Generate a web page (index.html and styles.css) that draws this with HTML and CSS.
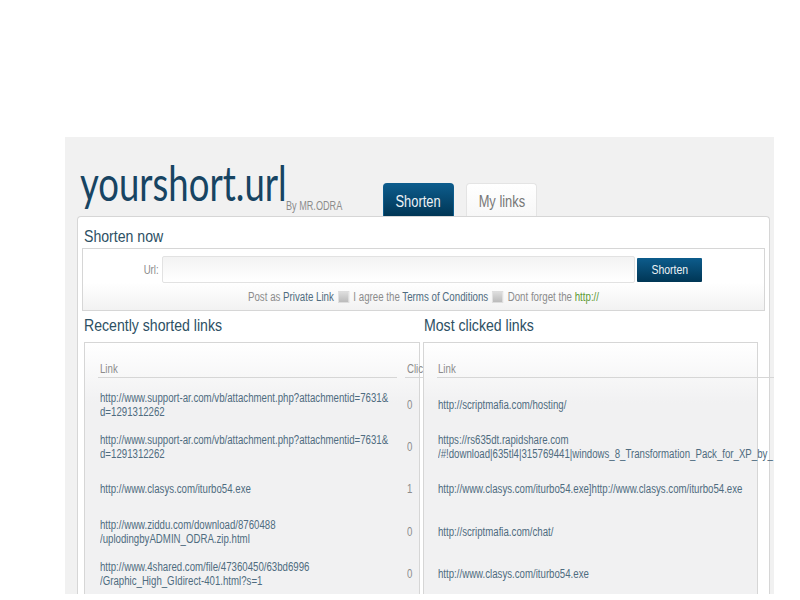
FILE: index.html
```html
<!DOCTYPE html>
<html lang="en">
<head>
    <meta charset="UTF-8">
    <meta name="viewport" content="width=device-width, initial-scale=1.0">
    <title>yourshort.url</title>
    <link rel="stylesheet" href="styles.css">
</head>
<body>
    <div class="page">
        <div class="header">
            <div class="logo">yourshort.url</div>
            <div class="by">By MR.ODRA</div>
            <div class="tabs">
                <a class="tab active" href="#"><span>Shorten</span></a>
                <a class="tab" href="#"><span>My links</span></a>
            </div>
        </div>

        <div class="panel">
            <h2 class="title"><span>Shorten now</span></h2>
            <form class="shorten-box" onsubmit="return false;">
                <div class="url-row">
                    <label class="url-label" for="url"><span>Url:</span></label>
                    <input class="url-input" type="text" id="url">
                    <button class="btn" type="submit"><span>Shorten</span></button>
                </div>
                <div class="options">
                    <span>Post as <a href="#">Private Link</a></span>
                    <span class="check"></span>
                    <span>I agree the <a href="#">Terms of Conditions</a></span>
                    <span class="check"></span>
                    <span>Dont forget the <span class="green">http://</span></span>
                </div>
            </form>

            <div class="columns">
                <div class="column">
                    <h2 class="title"><span>Recently shorted links</span></h2>
                    <div class="list-box">
                        <table class="links two">
                            <thead>
                                <tr><th><span>Link</span></th><th><span>Clicks</span></th></tr>
                            </thead>
                            <tbody>
                                <tr><td><a href="#">http://www.support-ar.com/vb/attachment.php?attachmentid=7631&amp;<br>d=1291312262</a></td><td><span>0</span></td></tr>
                                <tr><td><a href="#">http://www.support-ar.com/vb/attachment.php?attachmentid=7631&amp;<br>d=1291312262</a></td><td><span>0</span></td></tr>
                                <tr><td><a href="#">http://www.clasys.com/iturbo54.exe</a></td><td><span>1</span></td></tr>
                                <tr><td><a href="#">http://www.ziddu.com/download/8760488<br>/uplodingbyADMIN_ODRA.zip.html</a></td><td><span>0</span></td></tr>
                                <tr><td><a href="#">http://www.4shared.com/file/47360450/63bd6996<br>/Graphic_High_GIdirect-401.html?s=1</a></td><td><span>0</span></td></tr>
                            </tbody>
                        </table>
                    </div>
                </div>
                <div class="column">
                    <h2 class="title"><span>Most clicked links</span></h2>
                    <div class="list-box front">
                        <table class="links one">
                            <thead>
                                <tr><th><span>Link</span></th></tr>
                            </thead>
                            <tbody>
                                <tr><td><a href="#">http://scriptmafia.com/hosting/</a></td></tr>
                                <tr><td><a href="#">https://rs635dt.rapidshare.com<br>/#!download|635tl4|315769441|windows_8_Transformation_Pack_for_XP_by_</a></td></tr>
                                <tr><td><a href="#">http://www.clasys.com/iturbo54.exe]http://www.clasys.com/iturbo54.exe</a></td></tr>
                                <tr><td><a href="#">http://scriptmafia.com/chat/</a></td></tr>
                                <tr><td><a href="#">http://www.clasys.com/iturbo54.exe</a></td></tr>
                            </tbody>
                        </table>
                    </div>
                </div>
            </div>
        </div>
    </div>
</body>
</html>
```

FILE: styles.css
```css
body {
    margin: 0;
    padding: 137px 26px 0 65px;
    background-color: #fff;
    font-family: "Liberation Sans", Arial, sans-serif;
    color: #8c8c8c;
}

a {
    color: #4f6c80;
    text-decoration: none;
}

.page {
    height: 457px;
    overflow: hidden;
    background-color: #f1f1f1;
}

/* the text is squeezed sideways in the original */
.tab span,
.title span,
.url-label span,
.btn span,
.links th span,
.links td span,
.links td a {
    display: inline-block;
    transform: scaleX(0.805);
    transform-origin: left;
}

.title span {
    transform: scaleX(0.83);
}

.tab span,
.btn span {
    transform-origin: center;
}

.url-label span {
    transform-origin: right;
}

/* header */
.header {
    display: flex;
    align-items: flex-end;
    height: 79px;
    padding-left: 15px;
}

.logo {
    width: 206px;
    font-family: Lato, sans-serif;
    font-size: 49px;
    line-height: 58px;
    white-space: nowrap;
    color: #174462;
    margin-bottom: 5px;
    transform: scaleX(0.745);
    transform-origin: left;
}

.by {
    width: 57px;
    font-size: 12px;
    white-space: nowrap;
    margin-bottom: 3px;
    transform: scaleX(0.76);
    transform-origin: left;
}

.tabs {
    display: flex;
    gap: 12px;
    margin-left: 40px;
}

.tab {
    display: block;
    box-sizing: border-box;
    width: 71px;
    height: 33px;
    line-height: 35px;
    text-align: center;
    font-size: 16px;
    color: #777;
    background: linear-gradient(#fff, #f7f7f7);
    border: 1px solid #e4e4e4;
    border-bottom: 0;
    border-radius: 4px 4px 0 0;
}

.tab.active {
    color: #eef3f6;
    background: linear-gradient(#0d5c8c, #003655);
    border-color: #0d5c8c;
}

/* panel */
.panel {
    margin: 0 4px 0 12px;
    height: 378px;
    background-color: #fff;
    border: 1px solid #d6d6d6;
    border-bottom: 0;
    border-radius: 4px 4px 0 0;
    padding: 0 4px;
}

.title {
    margin: 0;
    font-size: 17px;
    font-weight: normal;
    color: #2d5064;
    padding-left: 2px;
    line-height: 31px;
    padding-top: 4px;
    height: 27px;
}

.shorten-box {
    box-sizing: border-box;
    height: 63px;
    border: 1px solid #d6d6d6;
    background: linear-gradient(#fff 55%, #f2f2f2);
}

.url-row {
    display: flex;
    align-items: center;
    padding-top: 7px;
}

.url-label {
    width: 76px;
    text-align: right;
    font-size: 12px;
    margin-right: 3px;
}

.url-input {
    box-sizing: border-box;
    width: 473px;
    height: 27px;
    border: 1px solid #e2e2e2;
    border-radius: 2px;
    background: linear-gradient(#f3f3f3, #fff);
}

.btn {
    width: 65px;
    height: 24px;
    margin-left: 2px;
    padding: 0;
    border: 0;
    border-radius: 1px;
    background: linear-gradient(#0d5c8c, #003655);
    color: #eef3f6;
    font-family: inherit;
    font-size: 13px;
}

.options {
    display: flex;
    justify-content: center;
    align-items: center;
    gap: 5px;
    margin-top: 7px;
    font-size: 12px;
    transform: scaleX(0.81);
}

.check {
    width: 14px;
    height: 12px;
    background: linear-gradient(#ddd, #bbb);
    border: 1px solid #ddd;
    box-sizing: border-box;
}

.green {
    color: #5d9a34;
}

/* link lists */
.columns {
    display: grid;
    grid-template-columns: 340px 340px;
}

.column {
    min-width: 0;
}

.column .title {
    line-height: 22px;
    height: 26px;
    padding-bottom: 1px;
}

.list-box {
    box-sizing: border-box;
    width: 336px;
    height: 260px;
    margin-left: 2px;
    border: 1px solid #d6d6d6;
    background: linear-gradient(#fff, #f1f1f2 60px);
    padding-top: 17px;
    padding-left: 5px;
}

.front {
    position: relative;
    width: 335px;
    margin-left: 1px;
}

.links {
    table-layout: fixed;
    width: 354px;
    border-collapse: separate;
    border-spacing: 8px 0;
    font-size: 12px;
}

.links th {
    font-weight: normal;
    text-align: left;
    white-space: nowrap;
    height: 16px;
    padding: 1px 0 0 2px;
    border-bottom: 1px solid #d6d6d6;
    overflow: hidden;
}

.links td {
    height: 42.2px;
    padding: 0 0 0 2px;
    line-height: 14px;
    white-space: nowrap;
}

.links.one th,
.links.one td {
    padding-left: 1px;
}

.links.two th:last-child {
    width: 29px;
}

.links tbody tr:first-child td {
    padding-top: 6px;
}
```
